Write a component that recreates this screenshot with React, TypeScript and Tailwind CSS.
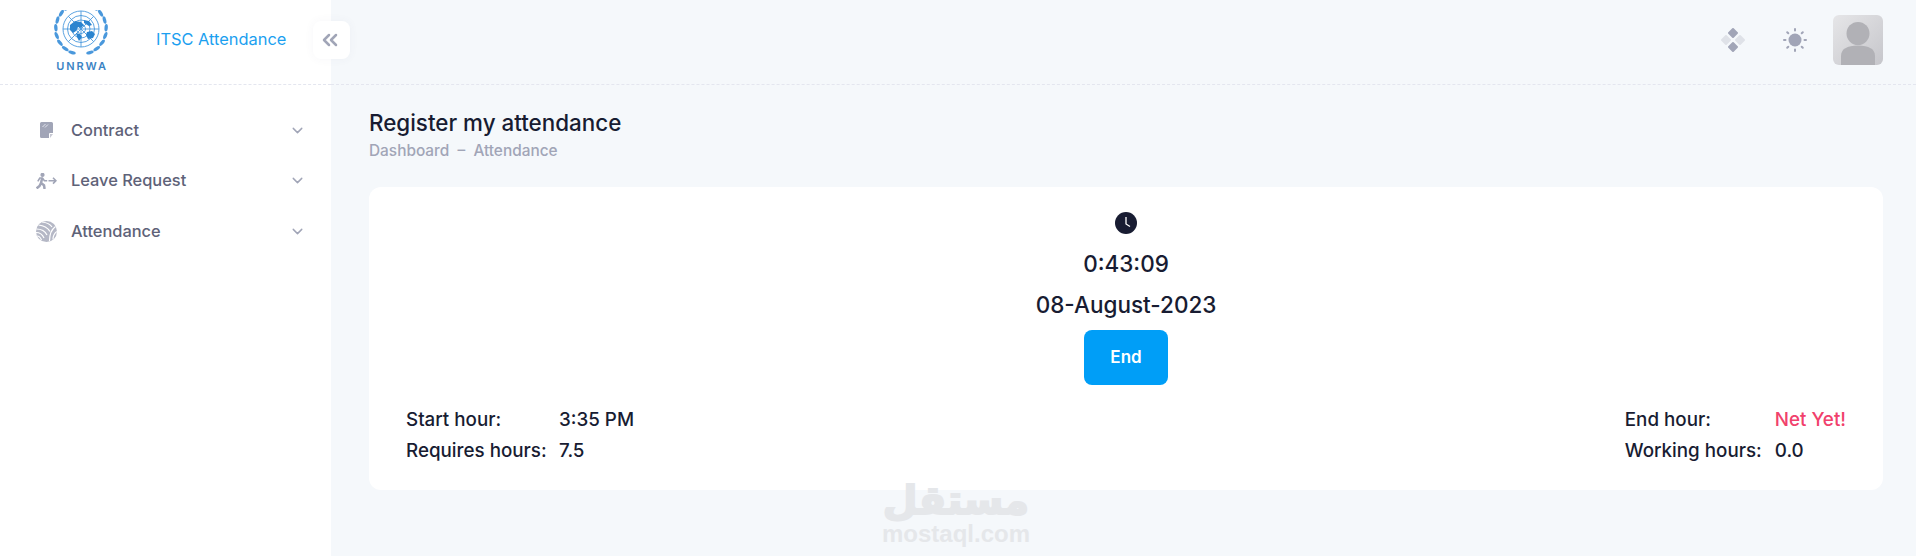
import { ChevronDown, ChevronsLeft } from "lucide-react";

const LEAF_ANGLES = [14, 32, 50, 68, 86, 104, 122, 140, 158];

function UnLogo() {
  return (
    <svg width="56" height="48" viewBox="0 0 56 48" fill="none">
      <g stroke="#4a98dc" strokeWidth="0.900">
        <circle cx="28" cy="19" r="18" />
        <circle cx="28" cy="19" r="13.500" />
        <circle cx="28" cy="19" r="9" />
        <circle cx="28" cy="19" r="4.500" />
        <path d="M28 1v36M10 19h36M15.300 6.300l25.400 25.400M40.700 6.300L15.300 31.700" />
      </g>
      <path
        fill="#2b84cf"
        d="M17 15l5-4 6 1 3 3-3 3-3-1-2 4-3 2-3-3zM31 10l5 1 3 4-3 1-5-3zM23 23l4 1 2 3-3 4-2-4zM34 22l5-1 3 3-2 4-5 1-2-4z"
      />
      {LEAF_ANGLES.map((a) => (
        <g key={a} fill="#4a98dc">
          <ellipse cx="25" cy="44" rx="3.800" ry="1.700" transform={`rotate(${a} 28 19)`} />
          <ellipse cx="31" cy="44" rx="3.800" ry="1.700" transform={`rotate(${-a} 28 19)`} />
        </g>
      ))}
    </svg>
  );
}

function ContractIcon() {
  return (
    <svg width="13" height="16" viewBox="0 0 13 16">
      <path fill="#a1a5b7" d="M1.500 0h10A1.500 1.500 0 0 1 13 1.500V11H10a1 1 0 0 0-1 1v4H1.500A1.500 1.500 0 0 1 0 14.500v-13A1.500 1.500 0 0 1 1.500 0z" />
      <path fill="#a1a5b7" opacity="0.6" d="M10 12h3l-3 4z" />
      <path stroke="#e4e6ef" strokeWidth="1" d="M2.500 5l3-3M5 5.500l3-3" />
    </svg>
  );
}

function LeaveIcon() {
  return (
    <svg width="21" height="16" viewBox="0 0 21 16" fill="none">
      <circle cx="6.500" cy="1.900" r="2.100" fill="#a1a5b7" />
      <g stroke="#a1a5b7" strokeWidth="2.500" strokeLinejoin="round">
        <path d="M6.200 5L5 10l3 2.200.6 3.800M5 10l-1.500 3L.6 15.400" />
      </g>
      <g stroke="#a1a5b7" strokeWidth="1.600">
        <path d="M1.800 8.300L3.800 5h2.600l2 2.700h2.800" />
        <path d="M12.500 7.700h7M17 4.800l2.900 2.900-2.900 2.900" />
      </g>
    </svg>
  );
}

function AttendanceIcon() {
  return (
    <svg width="21" height="21" viewBox="0 0 21 21" fill="none">
      <circle cx="10.500" cy="10.500" r="10.500" fill="#b5b8c6" />
      <g stroke="#ffffff" strokeWidth="1.200" fill="none">
        <path d="M6 1c4 .5 8 2 10 5M2.500 4c5 .5 9 2.500 11.500 6.500M.5 8c4.500 0 8.500 2 10.500 6M0 11.500c3.500 0 6.500 2 8 5.500M1 15c2 0 3.500 1.500 4.500 4" />
        <path d="M19.500 5.500c-3.500 2.500-6 7.500-6 14.500M20.800 10.500c-2 1.500-3.800 4-3.800 8" />
      </g>
    </svg>
  );
}

function NavItem({ icon, label }: { icon: React.ReactNode; label: string }) {
  return (
    <div className="flex h-[50.500px] items-center pl-[36px] pr-[25px]">
      <span className="flex w-[21px] justify-center">{icon}</span>
      <span className="ml-[14px] flex-1 text-[16.400px] font-medium text-[#5e6278]">{label}</span>
      <ChevronDown size={17} strokeWidth={2} className="text-[#a1a5b7]" />
    </div>
  );
}

function DiamondsIcon() {
  return (
    <svg width="24" height="24" viewBox="0 0 24 24">
      <rect x="8.200" y="1.200" width="7.600" height="7.600" rx="1" fill="#a1a5b7" transform="rotate(45 12 5)" />
      <rect x="8.200" y="15.200" width="7.600" height="7.600" rx="1" fill="#a1a5b7" transform="rotate(45 12 19)" />
      <rect x="1.200" y="8.200" width="7.600" height="7.600" rx="1" fill="#dfe2e8" transform="rotate(45 5 12)" />
      <rect x="15.200" y="8.200" width="7.600" height="7.600" rx="1" fill="#dfe2e8" transform="rotate(45 19 12)" />
    </svg>
  );
}

function SunIcon() {
  return (
    <svg width="24" height="24" viewBox="0 0 24 24" fill="#a1a5b7">
      <circle cx="12" cy="12" r="6.500" />
      <g stroke="#a1a5b7" strokeWidth="2" strokeLinecap="round">
        <path d="M12 1v1.500M12 21.500V23M1 12h1.500M21.500 12H23M4.200 4.200l1.100 1.100M18.700 18.700l1.100 1.100M4.200 19.800l1.100-1.100M18.700 5.300l1.100-1.100" />
      </g>
    </svg>
  );
}

function Avatar() {
  return (
    <div className="h-[50px] w-[50px] overflow-hidden rounded-md bg-gradient-to-br from-[#e6e6e8] to-[#c6c6cb]">
      <svg width="50" height="50" viewBox="0 0 50 50" fill="#b1b1b6">
        <circle cx="25" cy="18.500" r="11.500" />
        <path d="M8 50V41c0-7 6-10.500 17-10.500S42 34 42 41v9z" />
      </svg>
    </div>
  );
}

function ClockIcon() {
  return (
    <svg width="22" height="22" viewBox="0 0 22 22">
      <circle cx="11" cy="11" r="11" fill="#181c32" />
      <path d="M11 5v7l4 2.500" fill="none" stroke="#ffffff" strokeWidth="1.300" />
    </svg>
  );
}

function Stat({ label, value, width, red }: { label: string; value: string; width: string; red?: boolean }) {
  return (
    <div className="flex h-[31px] items-center">
      <span className={width}>{label}</span>
      <span className={red ? "text-[#f1416c]" : ""}>{value}</span>
    </div>
  );
}

export default function App() {
  return (
    <div className="relative flex h-[556px] w-full overflow-hidden bg-[#f5f8fb] font-['Inter',sans-serif] text-[#181c32]">
      <aside className="w-[331px] shrink-0 bg-white">
        <div className="flex h-[85px] items-start border-b border-dashed border-[#e4e6ef] pl-[53px]">
          <div className="flex w-[56px] flex-col items-center pt-[10px]">
            <UnLogo />
            <span className="mt-[2px] pl-[2px] text-[11px] font-semibold leading-[12px] tracking-[1.900px] text-[#3b84c4]">UNRWA</span>
          </div>
          <span className="ml-[47px] mt-[28px] text-[16.400px] leading-[22px] text-[#1b9ff0]">ITSC Attendance</span>
        </div>
        <nav className="pt-[20px]">
          <NavItem icon={<ContractIcon />} label="Contract" />
          <NavItem icon={<LeaveIcon />} label="Leave Request" />
          <NavItem icon={<AttendanceIcon />} label="Attendance" />
        </nav>
      </aside>

      <main className="min-w-0 flex-1">
        <header className="flex h-[85px] items-center justify-end border-b border-dashed border-[#e4e6ef] pb-[4px] pr-[33px]">
          <DiamondsIcon />
          <span className="ml-[38px]"><SunIcon /></span>
          <span className="ml-[26px]"><Avatar /></span>
        </header>
        <div className="pl-[38px] pr-[33px] pt-[24px]">
          <h1 className="text-[22.400px] font-medium leading-[28px]">Register my attendance</h1>
          <p className="mt-[4px] text-[15.400px] font-medium leading-[20px] text-[#a1a5b7]">Dashboard&nbsp; –&nbsp; Attendance</p>
          <section className="relative mt-[26px] h-[303px] rounded-xl bg-white text-[18.800px] font-medium">
            <div className="flex flex-col items-center pt-[24px]">
              <span className="mt-[1px]"><ClockIcon /></span>
              <div className="mt-[16px] text-[22.500px] leading-[28px]">0:43:09</div>
              <div className="mt-[13px] text-[22.500px] leading-[28px]">08-August-2023</div>
              <button className="mt-[11px] h-[55px] w-[84px] rounded-lg bg-[#009ef7] text-[17px] font-semibold text-white">End</button>
            </div>
            <div className="mt-[20px] flex justify-between pl-[37px] pr-[37px]">
              <div>
                <Stat label="Start hour:" value="3:35 PM" width="w-[153px]" />
                <Stat label="Requires hours:" value="7.5" width="w-[153px]" />
              </div>
              <div>
                <Stat label="End hour:" value="Net Yet!" width="w-[150px]" red />
                <Stat label="Working hours:" value="0.0" width="w-[150px]" />
              </div>
            </div>
          </section>
        </div>
      </main>

      <button className="absolute left-[313px] top-[21px] flex h-[38px] w-[37px] items-center justify-center rounded-lg bg-white shadow-[0_0_10px_rgba(76,87,125,0.05)]">
        <ChevronsLeft size={24} strokeWidth={2.500} className="-ml-[4px] text-[#a1a5b7]" />
      </button>

      <div className="pointer-events-none absolute left-[881px] top-[478px] flex w-[150px] flex-col items-center text-[#e5e7ea]">
        <span className="font-['DejaVu_Sans',sans-serif] text-[40px] font-bold leading-[44px] [-webkit-text-stroke:2px_#e5e7ea]">مستقل</span>
        <span className="font-['Liberation_Sans',sans-serif] text-[24px] font-bold leading-[24px]">mostaql.com</span>
      </div>
    </div>
  );
}
